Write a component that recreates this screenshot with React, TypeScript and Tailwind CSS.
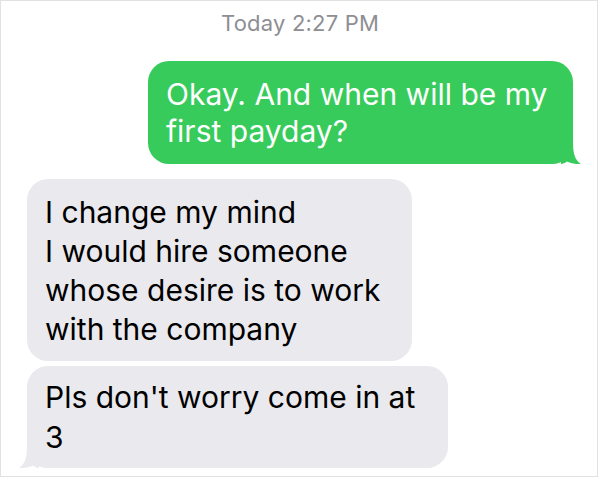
const Tail = ({ color, flip }: { color: string; flip?: boolean }) => (
  <svg
    className={
      flip
        ? "absolute bottom-0 left-[-8px] -scale-x-100"
        : "absolute bottom-0 right-[-8px]"
    }
    width="20"
    height="22"
    viewBox="0 0 20 22"
  >
    <path
      d="M0 0 H12 C12 12 14 18 20 22 C14 22.5 9 21 6 19.5 C4 21 2 22 0 22 Z"
      fill={color}
    />
  </svg>
);

const App = () => {
  return (
    <div className="w-[599px] h-[480px] bg-white font-['Inter','Liberation_Sans',sans-serif]">
      <div className="w-[598px] h-[477px] border border-[#e2e2e2] flex flex-col pl-[26px] pr-[24px]">
        <p className="pt-[8px] text-center text-[22px] leading-[28px] text-[#8e8e93] tracking-[0.2px]">
          Today 2:27 PM
        </p>

        <div className="flex justify-end mt-[24px]">
          <div className="relative w-[425px] rounded-[21px] bg-[#37cb5b] pl-[18px] pt-[15px] pb-[14px] text-white text-[30px] leading-[37px] whitespace-nowrap">
            Okay. And when will be my
            <br />
            first payday?
            <Tail color="#37cb5b" />
          </div>
        </div>

        <div className="flex flex-col items-start gap-[5px] mt-[15px]">
          <div className="w-[385px] rounded-[21px] bg-[#e9e9ee] pl-[18px] pt-[14px] pb-[12px] text-black text-[30px] leading-[39px] whitespace-nowrap">
            I change my mind
            <br />
            I would hire someone
            <br />
            whose desire is to work
            <br />
            with the company
          </div>
          <div className="relative w-[421px] rounded-[21px] bg-[#e9e9ee] pl-[18px] pt-[11px] pb-[11px] text-black text-[30px] leading-[40px] whitespace-nowrap">
            Pls don&apos;t worry come in at
            <br />
            3
            <Tail color="#e9e9ee" flip />
          </div>
        </div>
      </div>
    </div>
  );
};

export default App;
